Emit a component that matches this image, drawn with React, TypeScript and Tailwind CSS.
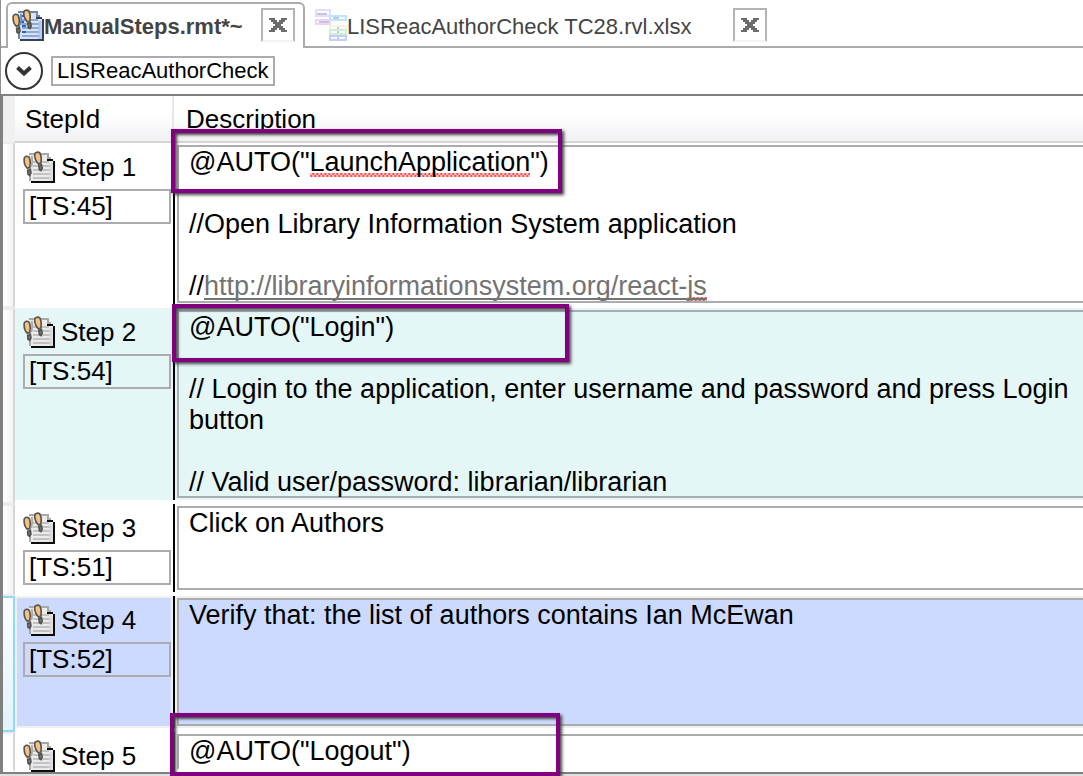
import React from "react";

type Step = {
  name: string;
  ts?: string;
  lines: React.ReactNode[];
  rowHeight: string;
  bodyHeight: string;
  cellBg: string;
  tone: string;
  boxTone: string;
  marker: string;
  callout?: string;
};

const squiggle =
  "bg-[repeating-conic-gradient(#ff4a4a_0_25%,#ffd2d2_0_50%)] bg-[length:4px_4px] bg-bottom bg-repeat-x";

const steps: Step[] = [
  {
    name: "Step 1",
    ts: "[TS:45]",
    lines: [
      <>
        @AUTO("<span className={squiggle}>LaunchApplication</span>")
      </>,
      "",
      "//Open Library Information System application",
      "",
      <>
        //
        <a
          href="http://libraryinformationsystem.org/react-js"
          className="text-[#737373] underline decoration-2 underline-offset-3 [text-decoration-skip-ink:none]"
        >
          http://libraryinformationsystem.org/react-
          <span className={squiggle}>js</span>
        </a>
      </>,
    ],
    rowHeight: "h-[166px]",
    bodyHeight: "h-[162px]",
    cellBg: "bg-white",
    tone: "border-transparent",
    boxTone: "border-[#ababb0]",
    marker: "border-[#ececee] border-r-[#d6d6d8] bg-linear-to-r from-white to-[#f3f3f5]",
    callout: "-top-3.5 -left-0.5 h-16 w-[391px]",
  },
  {
    name: "Step 2",
    ts: "[TS:54]",
    lines: [
      '@AUTO("Login")',
      "",
      "// Login to the application, enter username and password and press Login button",
      "",
      "// Valid user/password: librarian/librarian",
    ],
    rowHeight: "h-[196px]",
    bodyHeight: "h-[192px]",
    cellBg: "bg-[#e4f7f6]",
    tone: "border-transparent",
    boxTone: "border-[#ababb0]",
    marker: "border-[#ececee] border-r-[#d6d6d8] bg-linear-to-r from-white to-[#f3f3f5]",
    callout: "-top-1 -left-px h-[58px] w-[397px]",
  },
  {
    name: "Step 3",
    ts: "[TS:51]",
    lines: ["Click on Authors"],
    rowHeight: "h-[92px]",
    bodyHeight: "h-[88px]",
    cellBg: "bg-white",
    tone: "border-transparent",
    boxTone: "border-[#ababb0]",
    marker: "border-[#ececee] border-r-[#d6d6d8] bg-linear-to-r from-white to-[#f3f3f5]",
  },
  {
    name: "Step 4",
    ts: "[TS:52]",
    lines: ["Verify that: the list of authors contains Ian McEwan"],
    rowHeight: "h-[136px]",
    bodyHeight: "h-[132px]",
    cellBg: "bg-[#ccdaff]",
    tone: "border-[#f0f0f0]",
    boxTone: "border-[#ababae]",
    marker: "border-[#93d7f9] bg-linear-to-b from-[#fafdfe] to-[#e3f3fb]",
  },
  {
    name: "Step 5",
    lines: ['@AUTO("Logout")'],
    rowHeight: "h-10",
    bodyHeight: "h-10",
    cellBg: "bg-white",
    tone: "border-transparent",
    boxTone: "border-[#ababb0] border-b-transparent",
    marker: "border-[#ececee] border-b-transparent border-r-[#d6d6d8] bg-white",
    callout: "-top-[19px] -left-[3px] h-[63px] w-[390px]",
  },
];

function ManualIcon({ tinted = false }: { tinted?: boolean }) {
  const page = tinted ? "#d6e4f8" : "#ebebeb";
  const edge = tinted ? "#33415f" : "#0c0c0c";
  const rule = tinted ? "#93a8cc" : "#c2c2c2";
  const fringe = tinted ? "#6f87ac" : "#a8a8a8";
  const dark = tinted ? "#55514a" : "#55534f";
  return (
    <svg viewBox="0 0 16 16" className="size-8 shrink-0" aria-hidden="true">
      <g shapeRendering="crispEdges">
        <path d="M3 2h9v2h3v11H3z" fill={page} />
        <path d="M3 1h10v1H3zM3 8h1v7H3z" fill={fringe} />
        <path d="M12 2h1v1h1v1h1v1h-2V4h-1z" fill={fringe} />
        <path d="M12 4h3v1h1v11H4v-1h11V5h-3z" fill={edge} />
        <path d="M5 5h8v1H5zM5 7h9v1H5zM5 9h9v1H5zM5 11h9v1H5zM5 13h9v1H5z" fill={rule} />
        <path d="M13 6h2v9h-2z" fill={tinted ? "#a9c2ea" : "#d8d8d8"} fillOpacity="0.7" />
        {tinted && <path d="M5 3h1v1H5zM4 6h2v1H4zM5 8h2v1H5zM5 11h2v1H5z" fill="#1c62e8" />}
      </g>
      <g stroke={dark} strokeWidth="0.8">
        <path d="M.6 3.600Q1.500 1.900 3 3.100 4 5 3.400 8L2.200 8.700Q.3 7 .6 3.600z" fill="#f3c183" />
        <path d="M2.300 9.700 3.700 9.200 4 11 3.300 12.200 2.500 11.700z" fill="#77736c" />
        <path d="M6 1.200Q7 .1 8.400.9 9.500 3 8.900 6L7.800 6.500Q5.400 4 6 1.200z" fill="#f3c183" />
        <path d="M7.900 7.200 9.200 6.800 9.600 8.600 9 9.800 8.200 9.400z" fill="#77736c" />
      </g>
      <path d="M4.400 2.500Q5 5 4.200 8" fill="none" stroke={fringe} strokeWidth="0.9" />
    </svg>
  );
}

function SheetIcon() {
  return (
    <svg viewBox="0 0 16 16" className="size-8 shrink-0" shapeRendering="crispEdges" aria-hidden="true">
      <g>
        <path d="M0 0h8v4H0z" fill="#e2defb" />
        <path d="M0 5h8v3H0z" fill="#eed2f8" />
        <path d="M7 3h9v3H7z" fill="#bfe5fb" />
        <path d="M7 8h9v2H7z" fill="#fdf0dd" />
        <path d="M7 10h9v3H7z" fill="#cfeed6" />
        <path d="M7 13h9v3H7z" fill="#c2cffa" />
      </g>
      <path d="M1 1h6v2H1zM1 6h6v1H1zM8 4h7v1H8zM8 9h7v1H8zM8 11h7v1H8zM8 14h7v1H8z" fill="#fafaff" />
      <path d="M1 2h5v1H1zM2 6h5v1H2zM9 4h3v1H9zM11 9h1v1h-1zM11 11h1v1h-1zM11 14h1v1h-1z" fill="#c6c6d2" />
    </svg>
  );
}

function CloseButton({ label }: { label: string }) {
  return (
    <button
      type="button"
      aria-label={label}
      className="flex size-[34px] shrink-0 items-center justify-center border-2 border-[#b4b4b4] border-b-[#f4f4f4] bg-white"
    >
      <svg viewBox="0 0 9 7" className="h-3.5 w-[18px]" shapeRendering="crispEdges" aria-hidden="true">
        <path
          d="M0 0h3v1h1v1h1V1h1V0h3v1H8v1H7v1H6v1h1v1h1v1h1v1H6V6H5V5H4v1H3v1H0V6h1V5h1V4h1V3H2V2H1V1H0z"
          fill="#6c6c6c"
        />
      </svg>
    </button>
  );
}

function StepRow({ step }: { step: Step }) {
  return (
    <tr className={step.rowHeight}>
      <td className="p-0 align-top">
        <div className={`${step.rowHeight} border-y-2 border-r-2 ${step.marker}`} />
      </td>
      <td className="p-0 align-top">
        <div className={`${step.bodyHeight} ${step.cellBg} ${step.tone} border-2 bg-clip-border px-1.5 pt-1.5`}>
          <div className="flex items-center gap-1.5">
            <ManualIcon />
            <span>{step.name}</span>
          </div>
          {step.ts && (
            <input
              aria-label={`${step.name} identifier`}
              defaultValue={step.ts}
              className="mt-1.5 h-[35px] w-[148px] border-2 border-[#ababb0] bg-transparent px-1 outline-none"
            />
          )}
        </div>
      </td>
      <td className="relative p-0 align-top">
        <div className={`${step.bodyHeight} ${step.cellBg} border-l-2 border-black`}>
          <div className={`h-full border-2 border-r-0 ${step.tone}`}>
            <div className={`h-full border-2 border-r-0 pl-2.5 text-[27px] leading-[31px] ${step.boxTone}`}>
              {step.lines.map((line, i) => (
                <p key={i} className="min-h-[31px]">
                  {line}
                </p>
              ))}
            </div>
          </div>
        </div>
        {step.callout && (
          <div
            className={`pointer-events-none absolute z-10 border-4 border-[#800080] shadow-[2px_2px_3px_#444,inset_2px_2px_3px_#444] ${step.callout}`}
          />
        )}
      </td>
    </tr>
  );
}

export default function App() {
  return (
    <div className="flex min-h-screen flex-col overflow-hidden bg-white font-['Liberation_Sans',Arial,sans-serif] text-[26px] leading-8 text-black">
      <div role="tablist" className="flex h-12 items-end border-l border-[#909090] text-[22px] text-[#444]">
        <div className="w-[5px] border-b-2 border-[#ababab]" />
        <div
          role="tab"
          aria-selected="true"
          className="flex h-[46px] w-[299px] items-center rounded-t-md border-2 border-b-0 border-[#ababab] pr-2 pb-0.5 pl-1"
        >
          <ManualIcon tinted />
          <span className="flex-1 pt-1 font-bold whitespace-nowrap">ManualSteps.rmt*~</span>
          <CloseButton label="Close ManualSteps.rmt" />
        </div>
        <div role="tab" aria-selected="false" className="flex h-[46px] flex-1 items-center border-b-2 border-[#ababab] pt-0.5 pl-2.5">
          <SheetIcon />
          <span className="w-[386px] pt-1 whitespace-nowrap">LISReacAuthorCheck TC28.rvl.xlsx</span>
          <CloseButton label="Close LISReacAuthorCheck TC28.rvl.xlsx" />
        </div>
      </div>

      <div className="flex h-[46px] items-center gap-2 border-l border-[#909090] pl-1">
        <button
          type="button"
          aria-label="Expand"
          className="flex size-[38px] items-center justify-center rounded-full border-2 border-[#333]"
        >
          <svg viewBox="0 0 16 10" className="h-2.5 w-4" aria-hidden="true">
            <path d="M1.500 1.500 8 7.500l6.500-6" fill="none" stroke="#333" strokeWidth="4" />
          </svg>
        </button>
        <input
          aria-label="Test name"
          defaultValue="LISReacAuthorCheck"
          className="h-[30px] w-56 border-2 border-[#ababb0] px-1 text-[22px] outline-none"
        />
      </div>

      <div className="flex-1 border-t-2 border-b-2 border-l-[3px] border-[#808080]">
        <table className="w-full table-fixed border-collapse">
          <colgroup>
            <col className="w-3" />
            <col className="w-[158px]" />
            <col />
          </colgroup>
          <thead>
            <tr className="h-[46px] bg-linear-to-b from-white from-40% to-[#f0f1f3] text-left">
              <td className="bg-[#f0f0f0] p-0" />
              <th className="border-r-2 border-b-2 border-r-[#e8e8ea] border-b-[#d5d5d5] p-0 pl-2.5 font-normal">StepId</th>
              <th className="border-b-2 border-[#d5d5d5] p-0 pl-3 font-normal">Description</th>
            </tr>
          </thead>
          <tbody>
            {steps.map((step) => (
              <StepRow key={step.name} step={step} />
            ))}
          </tbody>
        </table>
      </div>
      <div className="h-0.5 bg-[#e0e0e0]" />
    </div>
  );
}
